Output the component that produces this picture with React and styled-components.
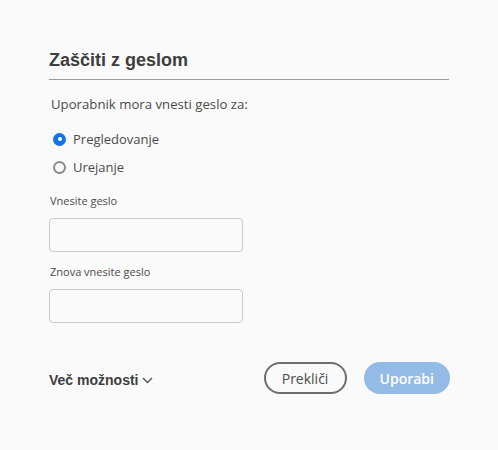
import React, { useState } from "react";
import styled, { createGlobalStyle } from "styled-components";

const Global = createGlobalStyle`
  html, body {
    margin: 0;
    background: #fafafa;
  }
  body {
    font-family: "Open Sans", "Noto Sans", sans-serif;
    color: #4b4b4b;
  }
`;

const Dialog = styled.div`
  width: 400px;
  padding: 47px 0 0 49px;
  display: flex;
  flex-direction: column;
`;

const Title = styled.h2`
  margin: 0;
  font-family: "Liberation Sans", Arial, sans-serif;
  font-size: 18px;
  font-weight: 700;
  color: #3e3e3e;
  line-height: 26px;
  padding-bottom: 6px;
  border-bottom: 1px solid #9a9a9a;
`;

const Lead = styled.p`
  margin: 15px 0 0 2px;
  font-size: 13.2px;
  line-height: 18px;
  color: #4b4b4b;
`;

const RadioGroup = styled.div`
  margin-top: 17px;
  display: flex;
  flex-direction: column;
  gap: 10px;
`;

const RadioRow = styled.label`
  display: flex;
  align-items: center;
  gap: 7px;
  font-size: 13px;
  line-height: 18px;
  color: #4b4b4b;
  cursor: pointer;
`;

const Dot = styled.span`
  box-sizing: border-box;
  width: 13px;
  height: 13px;
  margin-left: 4px;
  border-radius: 50%;
  flex: none;
  background: ${(p) => (p.$on ? "#1473e6" : "transparent")};
  border: ${(p) => (p.$on ? "none" : "2px solid #8a8a8a")};
  display: flex;
  align-items: center;
  justify-content: center;
  &::after {
    content: "";
    width: 4px;
    height: 4px;
    border-radius: 50%;
    background: #fff;
    display: ${(p) => (p.$on ? "block" : "none")};
  }
`;

const Field = styled.div`
  display: flex;
  flex-direction: column;
  margin-top: ${(p) => p.$top}px;
`;

const FieldLabel = styled.span`
  font-size: 11px;
  line-height: 16px;
  color: #4b4b4b;
  margin-left: 1px;
`;

const Input = styled.input`
  box-sizing: border-box;
  margin-top: 9px;
  width: 194px;
  height: 34px;
  border: 1px solid #cacaca;
  border-radius: 4px;
  background: #fafafa;
  outline: none;
`;

const Footer = styled.div`
  margin-top: 39px;
  display: flex;
  align-items: center;
  justify-content: space-between;
`;

const More = styled.button`
  border: none;
  background: none;
  padding: 0;
  margin-top: 4px;
  display: flex;
  align-items: center;
  gap: 4px;
  font-family: "Liberation Sans", Arial, sans-serif;
  font-weight: 700;
  font-size: 14px;
  color: #3e3e3e;
  cursor: pointer;
`;

const Buttons = styled.div`
  display: flex;
  gap: 17px;
  margin-right: -1px;
`;

const Button = styled.button`
  box-sizing: border-box;
  height: 32px;
  min-width: 83px;
  padding: 0 16px;
  border-radius: 16px;
  font-family: "Open Sans", "Noto Sans", sans-serif;
  font-size: 14px;
  cursor: pointer;
  border: ${(p) => (p.$primary ? "none" : "2px solid #6e6e6e")};
  background: ${(p) => (p.$primary ? "#94bbe6" : "transparent")};
  color: ${(p) => (p.$primary ? "#fff" : "#4b4b4b")};
  font-weight: ${(p) => (p.$primary ? 600 : 400)};
`;

export default function App() {
  const [mode, setMode] = useState("view");
  return (
    <>
      <Global />
      <Dialog>
        <Title>Zaščiti z geslom</Title>
        <Lead>Uporabnik mora vnesti geslo za:</Lead>
        <RadioGroup>
          <RadioRow onClick={() => setMode("view")}>
            <Dot $on={mode === "view"} />
            Pregledovanje
          </RadioRow>
          <RadioRow onClick={() => setMode("edit")}>
            <Dot $on={mode === "edit"} />
            Urejanje
          </RadioRow>
        </RadioGroup>
        <Field $top={17}>
          <FieldLabel>Vnesite geslo</FieldLabel>
          <Input type="password" />
        </Field>
        <Field $top={12}>
          <FieldLabel>Znova vnesite geslo</FieldLabel>
          <Input type="password" />
        </Field>
        <Footer>
          <More>
            Več možnosti
            <svg width="11" height="7" viewBox="0 0 11 7" fill="none">
              <path d="M1 1l4.5 4.5L10 1" stroke="#555" strokeWidth="1.4" />
            </svg>
          </More>
          <Buttons>
            <Button>Prekliči</Button>
            <Button $primary>Uporabi</Button>
          </Buttons>
        </Footer>
      </Dialog>
    </>
  );
}
